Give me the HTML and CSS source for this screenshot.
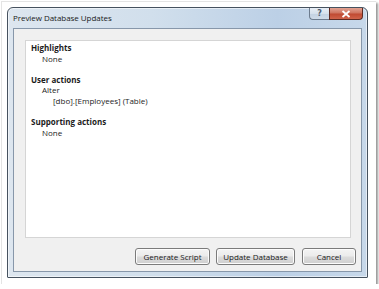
FILE: index.html
```html
<!DOCTYPE html>
<html>
<head>
<meta charset="utf-8">
<link rel="stylesheet" href="styles.css">
</head>
<body>
<div class="shot">
  <div class="window">
    <div class="titlebar">
      <span class="title">Preview Database Updates</span>
      <div class="caption-btns">
        <div class="cap help">?</div>
        <div class="cap close">
          <svg width="10" height="8" viewBox="0 0 10 8"><path d="M1.5 1 L8.5 7 M8.5 1 L1.5 7" stroke="#fff" stroke-width="1.8" fill="none"/></svg>
        </div>
      </div>
    </div>
    <div class="client">
      <div class="panel">
        <div class="h">Highlights</div>
        <div class="i1">None</div>
        <div class="gap"></div>
        <div class="h">User actions</div>
        <div class="i1">Alter</div>
        <div class="i2">[dbo].[Employees] (Table)</div>
        <div class="gap"></div>
        <div class="h">Supporting actions</div>
        <div class="i1">None</div>
      </div>
      <div class="buttons">
        <div class="btn w1">Generate Script</div>
        <div class="btn w2">Update Database</div>
        <div class="btn w3">Cancel</div>
      </div>
      <div class="grip"></div>
    </div>
  </div>
</div>
</body>
</html>
```

FILE: styles.css
```css
html, body {
  margin: 0;
  padding: 0;
  background: #fff;
}
body {
  font-family: "Open Sans", "Noto Sans", sans-serif;
  color: #1e1e1e;
}
.shot {
  margin: 1px 0 0 1px;
  width: 375px;
  height: 283px;
  border-top: 1px solid #e4e4e4;
  border-left: 1px solid #e4e4e4;
  box-shadow: 2px 2px 2px #9a9a9a;
  box-sizing: border-box;
  padding: 5px 0 0 5px;
  background: #fff;
}
.window {
  width: 361px;
  height: 271px;
  box-sizing: border-box;
  border: 1px solid #46525f;
  border-radius: 6px 6px 1px 1px;
  background: linear-gradient(90deg, #dde6ef 0%, #d1dfec 40%, #bcd0e6 75%, #c7d8ea 100%);
  padding: 0 5px 5px 5px;
  display: flex;
  flex-direction: column;
  box-shadow: inset 0 0 0 1px rgba(255,255,255,0.55);
}
.titlebar {
  height: 20px;
  display: flex;
  align-items: flex-start;
  justify-content: space-between;
  flex: none;
}
.title {
  font-size: 8px;
  margin-top: 4px;
  color: #1a1a1a;
  letter-spacing: -0.05px;
}
.caption-btns {
  display: flex;
  margin-right: -1px;
}
.cap {
  height: 12px;
  box-sizing: border-box;
  border: 1px solid #6d7c8e;
  border-top: none;
  display: flex;
  align-items: center;
  justify-content: center;
}
.help {
  width: 20px;
  border-radius: 0 0 0 4px;
  border-right: none;
  background: linear-gradient(180deg, #e8eef5 0%, #d6e1ec 50%, #c3d2e2 51%, #cfdbe8 100%);
  color: #4d5d70;
  font-size: 8px;
  font-weight: bold;
  font-family: "DejaVu Sans", sans-serif;
}
.close {
  width: 34px;
  border-radius: 0 0 4px 0;
  border-color: #5e2a22;
  background: linear-gradient(180deg, #e2a393 0%, #cf7460 45%, #c04a32 55%, #d0634a 100%);
}
.client {
  flex: 1;
  background: #f0f0f0;
  border: 1px solid #8797aa;
  display: flex;
  flex-direction: column;
  position: relative;
}
.panel {
  margin: 11px 10px 0 11px;
  height: 198px;
  box-sizing: border-box;
  background: #fff;
  border: 1px solid #d5d5d5;
  padding: 2px 0 0 5px;
  font-size: 8px;
  line-height: 10.6px;
  color: #1c1c1c;
}
.h {
  font-weight: bold;
}
.i1 {
  padding-left: 11px;
}
.i2 {
  padding-left: 22px;
}
.gap {
  height: 10.6px;
}
.buttons {
  display: flex;
  justify-content: flex-end;
  margin: 10px 5px 0 0;
}
.btn {
  height: 17px;
  box-sizing: border-box;
  border: 1px solid #7b7b7b;
  border-radius: 3px;
  background: linear-gradient(180deg, #f4f4f4 0%, #ebebeb 48%, #dcdcdc 52%, #cfcfcf 100%);
  box-shadow: inset 0 0 0 1px #fcfcfc;
  font-size: 8px;
  display: flex;
  align-items: center;
  justify-content: center;
  color: #1a1a1a;
}
.w1 { width: 75px; }
.w2 { width: 79px; margin-left: 6px; }
.w3 { width: 54px; margin-left: 7px; }
.grip {
  position: absolute;
  right: 0;
  bottom: 0;
  width: 5px;
  height: 5px;
  background-image: radial-gradient(circle, #d0d0d0 0.5px, transparent 0.6px);
  background-size: 2px 2px;
}
```
